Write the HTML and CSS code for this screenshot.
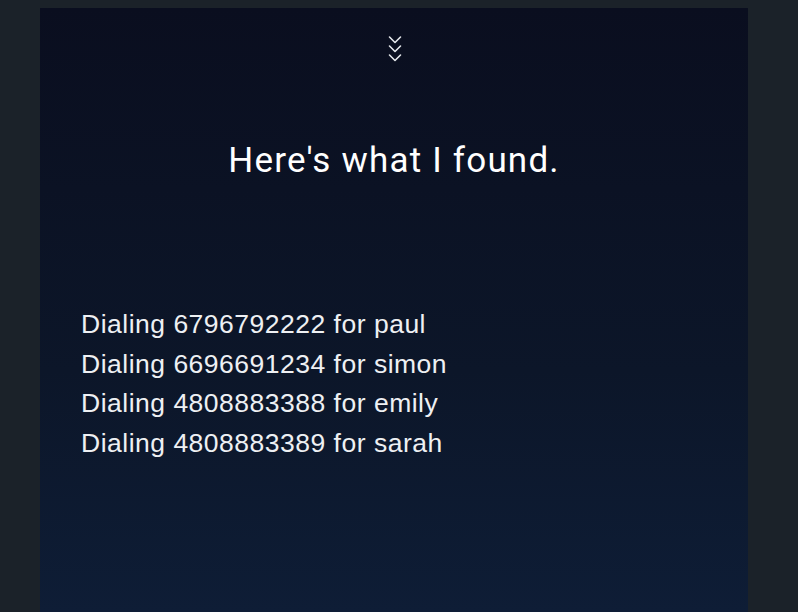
FILE: index.html
```html
<!DOCTYPE html>
<html>
<head>
<meta charset="utf-8">
<link rel="stylesheet" href="styles.css">
</head>
<body>
<main class="panel">
  <div class="chevrons" aria-hidden="true">
    <svg width="16" height="28" viewBox="0 0 16 28">
      <path d="M2.5 2 L8 7.5 L13.5 2 M2.5 11 L8 16.5 L13.5 11 M2.5 20 L8 25.5 L13.5 20" fill="none" stroke="#e6e8ec" stroke-width="1.6" stroke-linecap="round" stroke-linejoin="round"/>
    </svg>
  </div>
  <h1 class="title">Here's what I found.</h1>
  <ul class="results">
    <li>Dialing 6796792222 for paul</li>
    <li>Dialing 6696691234 for simon</li>
    <li>Dialing 4808883388 for emily</li>
    <li>Dialing 4808883389 for sarah</li>
  </ul>
</main>
</body>
</html>
```
FILE: styles.css
```css
html, body {
  margin: 0;
  padding: 0;
  height: 100%;
  background: #1b2229;
  overflow: hidden;
}
body {
  padding: 8px 50px 0 40px;
  box-sizing: border-box;
}
.panel {
  height: 100%;
  box-sizing: border-box;
  background: linear-gradient(180deg, #0a0e1f 0%, #0c1629 60%, #0e1d36 100%);
  display: flex;
  flex-direction: column;
  align-items: stretch;
}
.chevrons {
  display: flex;
  justify-content: center;
  padding-top: 27px;
  margin-left: 2px;
}
.chevrons svg {
  display: block;
}
.title {
  margin: 76px 0 0;
  text-align: center;
  font-family: Roboto, "Liberation Sans", sans-serif;
  font-weight: 400;
  font-size: 35px;
  letter-spacing: 1.2px;
  line-height: 44px;
  color: #ffffff;
}
.results {
  list-style: none;
  margin: 122px 0 0;
  padding: 0 0 0 41px;
  font-family: "Liberation Sans", Arial, sans-serif;
  font-size: 26.5px;
  letter-spacing: 0.5px;
  line-height: 39.7px;
  color: #eef0f3;
}
```
